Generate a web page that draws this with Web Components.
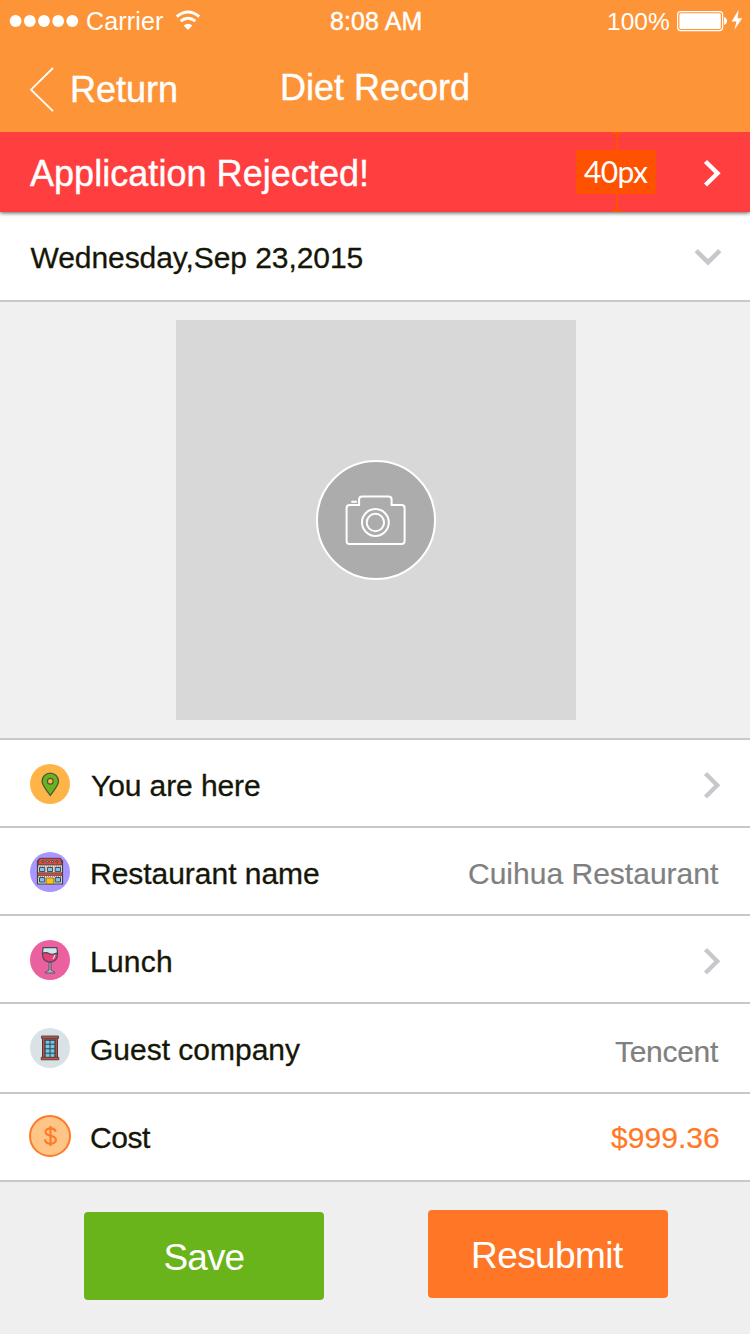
<!DOCTYPE html>
<html lang="en"><head><meta charset="utf-8"><title>Diet Record</title>
<style>html,body{margin:0;background:#efefef}body{width:750px;height:1334px;overflow:hidden;font-family:"Liberation Sans",Arial,sans-serif;color:#161608}</style>
</head><body>
<diet-app></diet-app>
<script>
const define=(name,html,after)=>{
  const t=document.createElement('template');t.innerHTML=html;
  customElements.define(name,class extends HTMLElement{
    constructor(){super();this.attachShadow({mode:'open'}).append(t.content.cloneNode(true))}
    connectedCallback(){if(after)after(this,this.shadowRoot)}
  });
};
const pen=document.createElement('canvas').getContext('2d');

/* A one-line label whose tracking is adjusted so its ink spans the "ink" width,
   with its baseline "base" pixels under the top of its row. */
define('fit-label',`<style>:host{display:block;flex:none;height:40px;line-height:40px;white-space:nowrap}span{display:block}</style><span><slot></slot></span>`,(el,root)=>{
  const size=+el.getAttribute('size'),ink=+el.getAttribute('ink'),text=el.textContent;
  const family=el.getAttribute('face')||'"Liberation Sans"';
  pen.font=size+'px '+family;
  const m=pen.measureText(text),s=root.querySelector('span');
  s.style.font=size+'px/40px '+family+', sans-serif';
  s.style.letterSpacing=((ink-m.actualBoundingBoxLeft-m.actualBoundingBoxRight)/(text.length-1)).toFixed(3)+'px';
  s.style.marginLeft=m.actualBoundingBoxLeft.toFixed(2)+'px';
  const weight=el.getAttribute('heavy');
  if(weight!==null)s.style.webkitTextStroke=(weight||'0.4')+'px currentColor';
  el.style.width=ink+'px';
  const up=Math.round(m.fontBoundingBoxAscent),down=Math.round(m.fontBoundingBoxDescent);
  el.style.marginTop=(+el.getAttribute('base')-Math.floor((40-up-down)/2)-up)+'px';
});

define('status-bar',`<style>:host{display:grid;grid-template-columns:331px 277px 1fr;height:40px;background:#fd9538;color:#fff}div{display:flex}svg{display:block}.l{padding-left:9px}</style>
<div class="l"><svg width="78" height="40" fill="#fff"><circle cx="6.6" cy="21" r="5.9"/><circle cx="20.8" cy="21" r="5.9"/><circle cx="35" cy="21" r="5.9"/><circle cx="49.2" cy="21" r="5.9"/><circle cx="63.3" cy="21" r="5.9"/></svg>
<fit-label size="25" ink="76" base="30">Carrier</fit-label>
<svg width="40" height="40" fill="none" stroke="#fff" stroke-width="3"><path d="M13.8 16.6Q25 7.4 36.2 16.6"/><path d="M17.7 21.2Q25 15.2 32.3 21.2"/><path d="M20.6 25.6Q25 22 29.4 25.6L25 30Z" fill="#fff" stroke="none"/></svg></div>
<div><fit-label size="25" ink="91" base="30" heavy>8:08 AM</fit-label></div>
<div><fit-label size="24.5" ink="61" base="30">100%</fit-label>
<svg width="81" height="40"><rect x="8.6" y="11.6" width="45" height="19" rx="3" fill="none" stroke="#fff" stroke-width="1.2"/><rect x="10.4" y="13.2" width="41.4" height="15.8" rx="1.5" fill="#fff"/><path d="M55 17q3 1.2 3 4t-3 4z" fill="#fff"/><path d="M69.6 10L62.6 21.6H67.4L65.6 29.5L73.2 18.2H68.6Z" fill="#fff"/></svg></div>`);

define('nav-bar',`<style>:host{display:grid;grid-template-columns:72px 210px 1fr;height:92px;background:#fd9538;color:#fff;position:relative;z-index:1}svg{display:block}</style>
<svg width="72" height="92"><path d="M53 28L31 49.7L53 71.2" fill="none" stroke="#fff" stroke-width="1.8"/></svg>
<fit-label size="36" ink="104" base="62" heavy>Return</fit-label>
<fit-label size="36" ink="186" base="60" heavy>Diet Record</fit-label>`);

define('measure-tag',`<style>:host{display:grid;justify-items:center;width:80px;height:80px;grid-template-rows:18px 44px 18px;color:#fff}.box{width:64px;padding:0 8px;height:44px;background:#ff5200}svg{display:block}</style>
<svg width="12" height="18" fill="#ff5200"><path d="M2 0H12V2H8V18H6V2H2Z"/></svg><div class="box"><fit-label size="30" ink="64" base="33" face="Lato">40px</fit-label></div><svg width="12" height="18" fill="#ff5200"><path d="M6 0H8V16H12V18H2V16H6Z"/></svg>`);

define('alert-bar',`<style>:host{display:grid;grid-template-columns:546px 80px 1fr;height:80px;padding-left:30px;background:#ff3e3f;color:#fff;box-shadow:0 1px 4px rgba(0,0,0,.65);position:relative}svg{display:block}</style>
<fit-label size="36" ink="336" base="54" heavy>Application Rejected!</fit-label><measure-tag></measure-tag>
<svg width="94" height="80"><path d="M49.5 29.5L61.5 41.2L49.5 53" fill="none" stroke="#fff" stroke-width="4.4"/></svg>`);

define('date-row',`<style>:host{display:flex;justify-content:space-between;box-sizing:border-box;height:90px;padding:0 0 0 30.5px;background:#fff;border-bottom:2px solid #c8c8c8}</style>
<fit-label size="30" ink="332" base="56" heavy="0.3">Wednesday,Sep 23,2015</fit-label><svg width="60" height="88"><path d="M6.2 38.7L18 50.2L29.8 38.7" fill="none" stroke="#c8c8cc" stroke-width="4.6"/></svg>`);

define('photo-picker',`<style>:host{display:flex;justify-content:center;box-sizing:border-box;height:438px;padding:18px 0 18px 2px;background:#f0f0f0;border-bottom:2px solid #c8c8c8}div{display:grid;place-items:center;width:400px;height:400px;background:#d8d8d8}</style>
<div><svg width="120" height="120" fill="none" stroke="#fff" stroke-width="2"><circle cx="60" cy="60" r="59" fill="#acacac"/><g transform="translate(-.4)"><path d="M34 45H43.5V39.5Q43.5 36.5 46.5 36.5H73Q76 36.5 76 39.5V45H86Q89 45 89 48V81Q89 84 86 84H34Q31 84 31 81V48Q31 45 34 45Z"/><path d="M36.5 41.7H40.5" stroke-linecap="round"/><circle cx="59.8" cy="62.5" r="13.4"/><circle cx="59.8" cy="62.5" r="8.7"/></g></svg></div>`);

/* Category badges, drawn on a 42-pixel square with the disc centred. */
const icons={
place:`<circle cx="21" cy="21" r="20" fill="#ffb447"/><path d="M21.3 32.5C16.8 26 13.1 22.5 13.1 18.3A8.2 8.2 0 0 1 29.5 18.3C29.5 22.5 25.8 26 21.3 32.5Z" fill="#69b31e" stroke="#4c5741" stroke-width="1.3"/><circle cx="21.3" cy="18.2" r="2.9" fill="#ffb447" stroke="#4c5741" stroke-width="1.2"/>`,
restaurant:`<circle cx="21" cy="21" r="20" fill="#a897ff"/><path d="M10 8.5H32L33.5 10V33H8.5V10Z" fill="#e8dfd8" stroke="#3f4149" stroke-width="1.2"/><path d="M10.5 7.3H31.5L33.5 13.8H8.5Z" fill="#d94b3e" stroke="#593a3b"/><path d="M8.5 21.8H33.5V24.4H8.5Z" fill="#d94b3e" stroke="#593a3b" stroke-width=".8"/><path d="M9 15H33M9 25.4H33" stroke="#a86c67" stroke-dasharray="1 1"/><g fill="#78c7e3" stroke="#3f4149" stroke-width="1"><path d="M10.5 16.4H15.8V20.6H10.5ZM18.4 16.4H23.6V20.6H18.4ZM26.2 16.4H31.5V20.6H26.2ZM10.5 26.6H15.8V31H10.5ZM26.2 26.6H31.5V31H26.2Z"/><circle cx="14" cy="10.5" r="1"/><circle cx="18.5" cy="10.5" r="1"/><circle cx="23.5" cy="10.5" r="1"/><circle cx="28" cy="10.5" r="1"/></g><path d="M17.2 27H24.8V33H17.2Z" fill="#f8c21c" stroke="#806222" stroke-width=".8"/>`,
wine:`<circle cx="21" cy="21" r="20" fill="#eb619f"/><path d="M14.2 8.7H27.8C29.5 17 28.5 22.5 21 23.2C13.5 22.5 12.5 17 14.2 8.7Z" fill="#cfe8ed"/><path d="M13.3 14.6Q17 12.7 20 14.5T28.7 13.9C28.8 19 26.5 22.6 21 22.9C15.8 22.6 13.4 19 13.3 14.6Z" fill="#e64075"/><path d="M14.2 8.7H27.8C29.5 17 28.5 22.5 21 23.2C13.5 22.5 12.5 17 14.2 8.7ZM13.3 14.6Q17 12.7 20 14.5T28.7 13.9" fill="none" stroke="#4b4857" stroke-width="1.2"/><path d="M20 23.4H22V31L26 33.5V34H16V33.5L20 31Z" fill="#9bbac6" stroke="#4b4857" stroke-width=".8"/><path d="M25.8 16Q25.5 18.5 23.8 20" stroke="#fbd4e0" stroke-width="1.3" fill="none"/>`,
company:`<circle cx="21" cy="21" r="20" fill="#d9e3e7"/><path d="M13.5 10.5H28.5V32H13.5Z" fill="#c8503c" stroke="#4a3b3e"/><path d="M16 13.2H26V30.5H16Z" fill="#6fcbea" stroke="#383e4b" stroke-width="1.2"/><path d="M21 13V30.5M16 17.2H26M16 21.8H26M16 26.2H26" stroke="#383e4b" stroke-width="1"/><path d="M12.5 9H29.5V11.3H12.5Z" fill="#b06050" stroke="#514046" stroke-width=".9"/><path d="M12.2 30.3H29.8V32.8H12.2Z" fill="#d65035" stroke="#514046" stroke-width=".9"/>`,
cost:`<circle cx="21" cy="21" r="20" fill="#ffc587" stroke="#ff7927" stroke-width="2"/><path d="M26.8 16.8C26 14.3 24.1 13.4 21.5 13.4C18.7 13.4 16.5 14.6 16.5 17C16.5 22.2 26.9 19.2 26.9 24.7C26.9 27.2 24.5 28.7 21.5 28.7C18.5 28.7 16.3 27.2 15.9 24.4M21.5 11V31" fill="none" stroke="#ff7927" stroke-width="2.1"/>`};
define('category-icon',`<style>:host{display:block;width:42px;height:42px}</style><svg width="42" height="42"></svg>`,(el,root)=>{root.querySelector('svg').innerHTML=icons[el.getAttribute('name')]||''});

define('go-arrow',`<style>:host{display:block;width:18px;height:86px}</style><svg width="18" height="86"><path d="M3.5 33.5L15.2 45.2L3.5 57" fill="none" stroke="#c8c8cc" stroke-width="4.4"/></svg>`);

define('list-row',`<style>:host{display:grid;grid-template-columns:62px 1fr auto;box-sizing:border-box;height:88px;padding:0 31px 0 29px;background:#fff;border-bottom:2px solid #c8c8c8}:host([tall]){height:90px}category-icon{margin-top:23px}:host([price]) category-icon{margin-top:21px}.v{color:#808080}.v ::slotted(go-arrow){margin-right:-1px}:host([price]) .v{color:#ff7927}</style>
<category-icon></category-icon><slot></slot><div class="v"><slot name="value"></slot></div>`,(el,root)=>{
  const i=root.querySelector('category-icon');i.setAttribute('name',el.getAttribute('icon'));i.connectedCallback();
});

define('action-button',`<style>:host{display:flex;justify-content:center;width:240px;height:88px;border-radius:4px;background:#69b31b;color:#fff}:host([warm]){background:#ff7726}</style><slot></slot>`);

define('diet-app',`<style>:host{display:flex;flex-direction:column;width:750px;height:1334px;background:#efefef}footer{display:flex;gap:104px;align-items:flex-start;padding:28px 0 0 84px}action-button:first-child{margin-top:2px}</style>
<status-bar></status-bar><nav-bar></nav-bar><alert-bar></alert-bar><date-row></date-row><photo-picker></photo-picker>
<list-row icon="place"><fit-label size="30" ink="169" base="56" heavy="0.3">You are here</fit-label><go-arrow slot="value"></go-arrow></list-row>
<list-row icon="restaurant"><fit-label size="30" ink="227" base="56" heavy="0.3" style="padding-left:1px">Restaurant name</fit-label><fit-label slot="value" size="30" ink="250" base="56" heavy="0.2">Cuihua Restaurant</fit-label></list-row>
<list-row icon="wine"><fit-label size="30" ink="79" base="56" heavy="0.3" style="padding-left:1px">Lunch</fit-label><go-arrow slot="value"></go-arrow></list-row>
<list-row icon="company" tall><fit-label size="30" ink="209" base="56" heavy="0.3">Guest company</fit-label><fit-label slot="value" size="30" ink="104" base="58" heavy="0.2">Tencent</fit-label></list-row>
<list-row icon="cost" price><fit-label size="30" ink="60" base="54" heavy="0.3">Cost</fit-label><fit-label slot="value" size="30" ink="108" base="54" heavy="0.2">$999.36</fit-label></list-row>
<footer><action-button><fit-label size="37" ink="79" base="58">Save</fit-label></action-button><action-button warm><fit-label size="37" ink="150" base="58" style="padding-left:2px">Resubmit</fit-label></action-button></footer>`);
</script></body></html>
